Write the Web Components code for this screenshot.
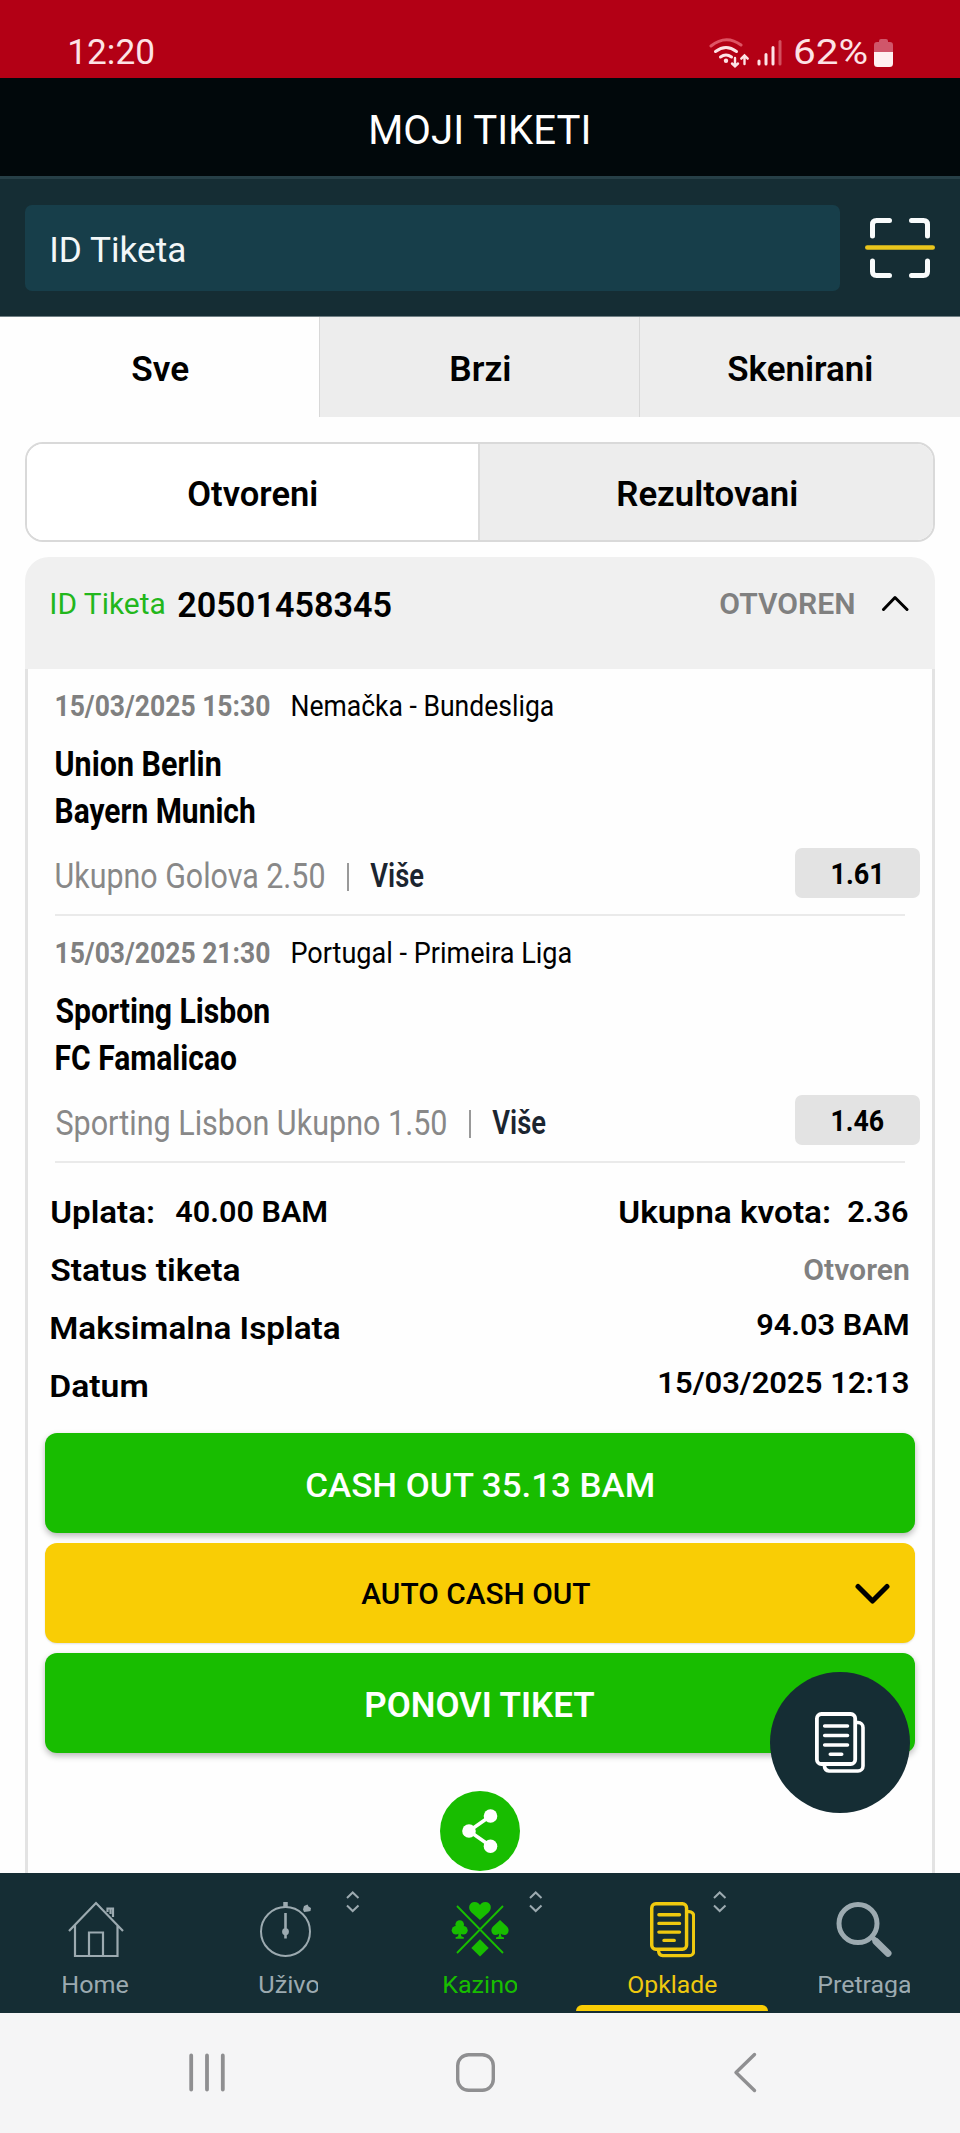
<!DOCTYPE html>
<html lang="bs">
<head>
<meta charset="utf-8">
<title>Moji tiketi</title>
<style>
html, body { margin: 0; padding: 0; background: #fefefe; }
body { width: 960px; height: 2133px; overflow: hidden; font-family: Roboto, "Liberation Sans", sans-serif; color: #000; }
</style>
</head>
<body>
<betting-app></betting-app>
<script>
const define = (name, html, setup) => {
  const tpl = document.createElement('template');
  tpl.innerHTML = html;
  customElements.define(name, class extends HTMLElement {
    constructor() {
      super();
      this.attachShadow({ mode: 'open' }).appendChild(tpl.content.cloneNode(true));
    }
    connectedCallback() { if (setup) setup(this, this.shadowRoot); }
  });
};

/* One line of text whose visible glyphs span exactly `w` pixels. */
const ctx = document.createElement('canvas').getContext('2d');
define('fit-text', `<style>
  :host { display: block; flex: none; white-space: nowrap; }
  span { display: inline-block; transform-origin: 0 0; white-space: nowrap; }
</style><span><slot></slot></span>`, (el, root) => {
  const size = el.getAttribute('s'), w = +el.getAttribute('w'), h = el.getAttribute('h') || 40;
  el.style.fontSize = size + 'px';
  el.style.width = w + 'px';
  el.style.height = el.style.lineHeight = h + 'px';
  const cs = getComputedStyle(el);
  ctx.font = cs.fontWeight + ' ' + size + 'px ' + cs.fontFamily;
  const m = ctx.measureText(el.textContent.trim());
  const k = w / (m.actualBoundingBoxLeft + m.actualBoundingBoxRight);
  root.querySelector('span').style.transform =
    'translateX(' + (m.actualBoundingBoxLeft * k + 0.3) + 'px) scaleX(' + k + ')';
});

define('status-bar', `<style>
  :host { display: flex; height: 78px; background: #b30015; color: #fde3e6; box-sizing: border-box; padding: 33px 67px 0 69px; }
  svg { flex: none; height: 40px; }
  .gap { flex: 1; }
  .pct { margin: 0 7px 0 12px; }
</style>
<fit-text s="35" w="84">12:20</fit-text><div class="gap"></div>
<svg width="74" height="40" viewBox="709 33 74 40" fill="none" stroke="#fde3e6" stroke-width="3" stroke-linecap="round">
  <path d="M711 46Q726 34 741 45" stroke="#de5464"/>
  <path d="M715.500 51.500Q726 43.500 736.500 51.500M720.500 57Q726 53 731.500 57"/>
  <circle cx="726" cy="60.700" r="2.200" fill="#fde3e6" stroke="none"/>
  <path d="M735 58V66M732 63.500L735 66.300L738 63.500M744.500 64V56M741.300 58.700L744.500 55.500L747.700 58.700" stroke-width="2.400"/>
  <path d="M759 61V64M766 54.500V64M773 47.500V64"/><path d="M780 41.500V64" stroke="#d2505f"/>
</svg>
<fit-text class="pct" s="35" w="72">62%</fit-text>
<svg width="19" height="40" viewBox="874 33 19 40"><path fill="#d0566a" d="M879 42v-1a2 2 0 0 1 2-2h5a2 2 0 0 1 2 2v1h2a3 3 0 0 1 3 3v8h-19v-8a3 3 0 0 1 3-3z"/><path fill="#fff0f1" d="M874 52h19v11.500a3.500 3.500 0 0 1-3.500 3.500h-12a3.500 3.500 0 0 1-3.500-3.500z"/></svg>`);

define('page-header', `<style>
  :host { display: flex; height: 98px; align-items: center; justify-content: center; background: #01080b; color: #fff; padding-top: 8px; box-sizing: border-box; }
</style><slot></slot>`);

define('ticket-search', `<style>
  :host { display: flex; height: 141px; box-sizing: border-box; background: #152d34; border-top: 3px solid #263f47; padding: 26px 25px 25px; border-bottom: 1px solid #6f7f84; gap: 25px; }
  .field { width: 815px; height: 86px; background: #173e4a; border-radius: 7px; display: flex; align-items: center; box-sizing: border-box; padding: 3px 0 0 27px; color: #f3f7f8; }
  svg { flex: none; }
</style>
<div class="field"><fit-text s="34.500" w="133">ID Tiketa</fit-text></div>
<svg width="70" height="86" viewBox="865 205 70 86" fill="none" stroke-width="5" stroke-linecap="round" stroke-linejoin="round">
  <path stroke="#f8fbfb" d="M872.500 236V224.500Q872.500 220.500 876.500 220.500H889.500M911.500 220.500H923.500Q927.500 220.500 927.500 224.500V236M872.500 261V271.500Q872.500 275.500 876.500 275.500H889.500M911.500 275.500H923.500Q927.500 275.500 927.500 271.500V261"/>
  <path stroke="#e9c51c" stroke-width="4.600" d="M867.300 247.500H932.700"/>
</svg>`);

define('tab-bar', `<style>
  :host { display: grid; grid-template-columns: 319px 320px 321px; height: 100px; font-weight: 600; }
  div { display: flex; align-items: center; justify-content: center; background: #ededed; border-left: 1px solid #d8d8d8; padding-top: 5px; box-sizing: border-box; }
  .on { background: #fefefe; border: 0; }
</style>
<div class="on"><fit-text s="35" w="56">Sve</fit-text></div>
<div><fit-text s="35" w="59" style="margin-left:2px">Brzi</fit-text></div>
<div><fit-text s="35" w="144">Skenirani</fit-text></div>`);

define('state-switch', `<style>
  :host { display: grid; grid-template-columns: 451px 1fr; height: 100px; margin: 25px 25px 15px; box-sizing: border-box; border: 2px solid #d9d9d9; border-radius: 18px; overflow: hidden; font-weight: 600; }
  div { display: flex; align-items: center; justify-content: center; padding-top: 4px; box-sizing: border-box; background: #fff; }
  .off { background: #ededed; border-left: 2px solid #dcdcdc; }
</style>
<div><fit-text s="34.500" w="129">Otvoreni</fit-text></div>
<div class="off"><fit-text s="34.500" w="179" style="margin-left:2px">Rezultovani</fit-text></div>`);

define('ticket-head', `<style>
  :host { display: flex; height: 112px; background: #f0f0f0; border-radius: 24px 24px 0 0; box-sizing: border-box; padding: 27px 26px 0; }
  .id { color: #23b71c; margin-right: 13px; }
  .num { font-weight: 600; }
  .st { font-weight: 600; color: #808080; margin-right: 27px; }
  .gap { flex: 1; }
</style>
<fit-text class="id" s="29.500" w="114">ID Tiketa</fit-text>
<fit-text class="num" s="34.500" w="213" h="42">20501458345</fit-text>
<div class="gap"></div>
<fit-text class="st" s="30" w="134">OTVOREN</fit-text>
<svg width="28" height="40" viewBox="881 584 28 40" fill="none" stroke="#000" stroke-width="3" stroke-linecap="round" stroke-linejoin="round"><path d="M883.500 609.500L895 597.500L907 609.500"/></svg>`);

define('match-row', `<style>
  :host { display: block; height: 247px; box-sizing: border-box; padding: 16.500px 12px 0 28px; }
  .top { display: flex; gap: 22px; }
  .date { color: #808080; font-weight: 700; }
  .teams { padding: 15px 0 13px; font-weight: 700; }
  .bet { display: flex; height: 50px; color: #888; }
  .bet > fit-text { margin-top: 8px; }
  .pipe { width: 2px; height: 28px; margin: 15px 21px 0 22.500px; background: #999; flex: none; }
  .more { color: #1b2530; font-weight: 600; }
  .gap { flex: 1; }
  .odd { width: 125px; height: 50px; border-radius: 7px; background: #e3e3e3; color: #000; font-weight: 700; box-sizing: border-box; padding: 6px 0 0 36.500px; }
  .line { height: 2px; background: #eaeaea; margin: 16.500px 15px 0 -1px; }
</style>
<div class="top"><fit-text class="date" s="29" w="213.500"></fit-text><fit-text class="league" s="29.500"></fit-text></div>
<div class="teams"><fit-text class="a" s="35" h="47"></fit-text><fit-text class="b" s="35" h="47"></fit-text></div>
<div class="bet"><fit-text class="market" s="34.500"></fit-text><div class="pipe"></div><fit-text class="more" s="34" w="53.500" h="38">Više</fit-text><div class="gap"></div><div class="odd"><fit-text class="price" s="29.500"></fit-text></div></div>
<div class="line"></div>`);
/* Each field is given as [text, width]; a width of 0 keeps the default. */
const Row = customElements.get('match-row');
define('match-list', `<style>:host { display: block; }</style>`, (el, root) => {
  JSON.parse(el.getAttribute('rows')).forEach(data => {
    const row = new Row();
    for (const key in data) {
      const t = row.shadowRoot.querySelector('.' + key);
      t.textContent = data[key][0];
      if (data[key][1]) t.setAttribute('w', data[key][1]);
    }
    root.appendChild(row);
  });
});

define('summary-row', `<style>
  :host { display: flex; height: 58px; align-items: center; font-weight: 600; justify-content: space-between; }
  div { display: flex; align-items: center; }
</style><div><slot name="left"></slot></div><div><slot></slot></div>`);

define('action-button', `<style>
  :host { display: grid; grid-template-columns: 1fr auto 1fr; align-items: center; height: 100px; box-sizing: border-box; border-radius: 12px; background: #18bd00; color: #fff; box-shadow: 0 3px 6px rgba(0,0,0,.28); margin-bottom: 10px; padding: 3px 24px 0; font-weight: 500; }
  :host([kind=auto]) { background: #f9cd05; color: #000; padding: 1px 25px 0 24px; box-shadow: 0 1px 2px rgba(0,0,0,.12); }
  ::slotted(svg) { justify-self: end; }
</style><i></i><slot></slot><slot name="end"></slot>`);

define('doc-icon', `<style>:host { display: block; } svg { display: block; width: 100%; height: 100%; }</style>
<svg viewBox="0 0 50 61" fill="none" stroke="currentColor" stroke-linecap="round">
  <rect x="1.900" y="2" width="38.300" height="50" rx="4.500" stroke-width="3.800"/>
  <path stroke-width="3.600" d="M41.500 10.500H43A5 5 0 0 1 48 15.500V54A5 5 0 0 1 43 59H14A5 5 0 0 1 9.500 54.500V53"/>
  <path stroke-width="3.600" d="M9.700 14H32.500M9.700 23.500H32.500M9.700 33H32.500M15.300 42.200H26.700"/>
</svg>`);

define('share-button', `<style>
  :host { display: grid; place-items: center; width: 80px; height: 80px; border-radius: 50%; background: #18bd00; margin: 38px auto 0; }
</style><svg width="80" height="80" viewBox="440 1791 80 80"><path d="M490.500 1816L469 1831L490.500 1846" fill="none" stroke="#fff" stroke-width="3.500"/><g fill="#fff"><circle cx="469" cy="1831" r="6.800"/><circle cx="490.500" cy="1816" r="6.800"/><circle cx="490.500" cy="1846.300" r="6.800"/></g></svg>`);

define('ticket-card', `<style>
  :host { display: block; margin: 0 25px; height: 1316px; overflow: hidden; }
  .body { border: solid #e3e3e3; border-width: 0 3px; height: 1210px; }
  .sum { padding: 20px 24px 18px 22.500px; }
  .act { padding: 0 17px; }
</style>
<ticket-head></ticket-head>
<div class="body">
  <match-list rows='[
    {"date":["15/03/2025 15:30",0],"league":["Nemačka - Bundesliga",261],"a":["Union Berlin",164],"b":["Bayern Munich",198],"market":["Ukupno Golova 2.50",268],"price":["1.61",48]},
    {"date":["15/03/2025 21:30",0],"league":["Portugal - Primeira Liga",279],"a":["Sporting Lisbon",212.5],"b":["FC Famalicao",180],"market":["Sporting Lisbon Ukupno 1.50",390],"price":["1.46",51]}]'></match-list>
  <div class="sum">
    <summary-row><fit-text slot="left" s="32" w="102">Uplata:</fit-text><fit-text slot="left" s="30" w="151.500" style="margin-left:22px">40.00 BAM</fit-text><fit-text s="32" w="210">Ukupna kvota:</fit-text><fit-text s="30" w="60" style="margin-left:19px">2.36</fit-text></summary-row>
    <summary-row><fit-text slot="left" s="32" w="188">Status tiketa</fit-text><fit-text s="29.500" w="104" style="color:#808080">Otvoren</fit-text></summary-row>
    <summary-row><fit-text slot="left" s="32" w="288">Maksimalna Isplata</fit-text><fit-text s="30" w="151" style="margin-top:-7px">94.03 BAM</fit-text></summary-row>
    <summary-row><fit-text slot="left" s="32" w="95.500">Datum</fit-text><fit-text s="30" w="249" style="margin-top:-7px">15/03/2025 12:13</fit-text></summary-row>
  </div>
  <div class="act">
    <action-button><fit-text s="34" w="348">CASH OUT 35.13 BAM</fit-text></action-button>
    <action-button kind="auto"><fit-text s="30" w="229" style="margin-right:9px">AUTO CASH OUT</fit-text><svg slot="end" width="35" height="22" viewBox="0 0 35 22" fill="none" stroke="#000" stroke-width="5" stroke-linecap="round" stroke-linejoin="round"><path d="M3 3.500L17.500 18L32 3.500"/></svg></action-button>
    <action-button><fit-text s="34.500" w="229" style="font-weight:600;margin-left:1px">PONOVI TIKET</fit-text></action-button>
    <share-button></share-button>
  </div>
</div>`);

define('nav-item', `<style>
  :host { display: flex; flex-direction: column; align-items: center; height: 140px; color: #9caab0; }
  .ic { height: 89px; width: 192px; }
  .lb { height: 35px; overflow: hidden; }
  .bar { display: none; width: 192px; height: 6px; border-radius: 6px 6px 0 0; background: #f9cd05; margin-top: 8px; }
  :host([active]) { color: #efc90f; }
  :host([active]) .bar { display: block; }
</style><div class="ic"><slot name="icon"></slot></div><div class="lb"><slot></slot></div><div class="bar"></div>`);

define('bottom-nav', `<style>
  :host { display: grid; grid-template-columns: repeat(5, 192px); height: 140px; background: #152d34; }
  svg { display: block; }
  .cell { display: grid; grid-template-columns: 192px; }
  .cell > * { grid-area: 1 / 1; }
  doc-icon { width: 45.500px; height: 55.500px; margin: 29px 0 0 73.500px; }
</style>
<nav-item>
  <svg slot="icon" width="192" height="89" viewBox="0 1873 192 89" fill="none" stroke="#9caab0" stroke-width="2.200">
    <path d="M69 1931L96 1903L123 1931M75 1925V1956H117.500V1925M89 1956V1932.500H103V1956M107.500 1912V1908.500H113V1917M110.500 1908.500V1914"/></svg>
  <fit-text s="24.500" w="65.500" h="46">Home</fit-text></nav-item>
<nav-item>
  <svg slot="icon" width="192" height="89" viewBox="192 1873 192 89" fill="none" stroke="#9caab0" stroke-width="2">
    <circle cx="285.500" cy="1931.500" r="24.500"/><path stroke-width="4.500" d="M285.500 1902V1908"/><path stroke-width="2.600" d="M285.500 1913V1938.500"/><circle cx="285.500" cy="1931.700" r="3.400" fill="#9caab0" stroke="none"/>
    <path fill="#9caab0" stroke="none" d="M304 1906L307.500 1904.500L308.500 1906.500L311 1908L310.500 1911L308 1911.500L304 1912L303 1909.500Z"/>
    <path d="M347 1898L352.700 1892.500L358.500 1898M347 1905.500L352.700 1911L358.500 1905.500"/></svg>
  <fit-text s="24.500" w="59.500" h="46" style="margin-left:1px">Uživo</fit-text></nav-item>
<nav-item style="color:#18bd00">
  <svg slot="icon" width="192" height="89" viewBox="384 1873 192 89" fill="#18bd00">
    <path d="M457 1906L503 1953M503 1906L457 1953" stroke="#18bd00" stroke-width="1.900"/>
    <path d="M480 1920L471.500 1912.500C467 1908 469.500 1902 474.500 1902C477.500 1902 479.200 1903.500 480 1905C480.800 1903.500 482.500 1902 485.500 1902C490.500 1902 493 1908 488.500 1912.500Z"/>
    <path d="M480 1939.200L488.700 1947.900L480 1956.600L471.300 1947.900Z"/>
    <circle cx="459.700" cy="1924.600" r="4.300"/><circle cx="456" cy="1930.300" r="4.300"/><circle cx="463.400" cy="1930.300" r="4.300"/><path d="M459 1930h1.500l.8 6.300 2.500 1v1.500h-8.200v-1.500l2.500-1z"/>
    <path d="M500 1920L506.700 1926.300C510.500 1930 508 1935 504.500 1935C502.500 1935 501.200 1934 500.800 1933.500L501.300 1936.500L504 1937.500V1939H496V1937.500L498.700 1936.500L499.200 1933.500C498.500 1934.200 497.300 1935 495.500 1935C492 1935 489.500 1930 493.300 1926.300Z"/>
    <path d="M530 1898L535.700 1892.500L541.500 1898M530 1905.500L535.700 1911L541.500 1905.500" fill="none" stroke="#9caab0" stroke-width="2"/></svg>
  <fit-text s="24.500" w="73" h="46">Kazino</fit-text></nav-item>
<nav-item active>
  <div slot="icon" class="cell"><doc-icon></doc-icon><svg width="192" height="89" viewBox="576 1873 192 89" fill="none" stroke="#9caab0" stroke-width="2"><path d="M714 1898L719.700 1892.500L725.500 1898M714 1905.500L719.700 1911L725.500 1905.500"/></svg></div>
  <fit-text s="24.500" w="89" h="46">Opklade</fit-text></nav-item>
<nav-item>
  <svg slot="icon" width="192" height="89" viewBox="768 1873 192 89" fill="none" stroke="#9caab0" stroke-linecap="round"><circle cx="858" cy="1923.500" r="19" stroke-width="5"/><path stroke-width="5" d="M872 1937L876 1941"/><path stroke-width="7" d="M876 1941.500L888 1953.300"/></svg>
  <fit-text s="24.500" w="91" h="46">Pretraga</fit-text></nav-item>`);

define('system-nav', `<style>:host { display: block; height: 120px; background: #f5f5f6; } svg { display: block; }</style>
<svg width="960" height="120" viewBox="0 2013 960 120" fill="none" stroke="#8f8f91" stroke-linecap="round" stroke-linejoin="round">
  <path stroke-width="3.800" d="M191.200 2055.500V2089.500M207 2055.500V2089.500M222.800 2055.500V2089.500"/>
  <rect x="457.700" y="2054.700" width="35.600" height="35.600" rx="11" stroke-width="3.400"/>
  <path stroke-width="3.400" d="M754.500 2054.500L736 2072.500L754.500 2090.500"/>
</svg>`);

define('betting-app', `<style>
  :host { display: flex; flex-direction: column; width: 960px; height: 2133px; position: relative; }
  .fab { position: absolute; left: 770px; top: 1672px; width: 140px; height: 141px; border-radius: 50%; background: #152d34; color: #fff; display: grid; place-items: center; }
  .fab doc-icon { width: 50px; height: 61px; }
  status-bar, page-header, ticket-search, tab-bar, state-switch, ticket-card, bottom-nav, system-nav { flex: none; }
</style>
<status-bar></status-bar>
<page-header><fit-text s="40" w="218">MOJI TIKETI</fit-text></page-header>
<ticket-search></ticket-search>
<tab-bar></tab-bar>
<state-switch></state-switch>
<ticket-card></ticket-card>
<bottom-nav></bottom-nav>
<system-nav></system-nav>
<div class="fab"><doc-icon></doc-icon></div>`);
</script>
</body>
</html>
